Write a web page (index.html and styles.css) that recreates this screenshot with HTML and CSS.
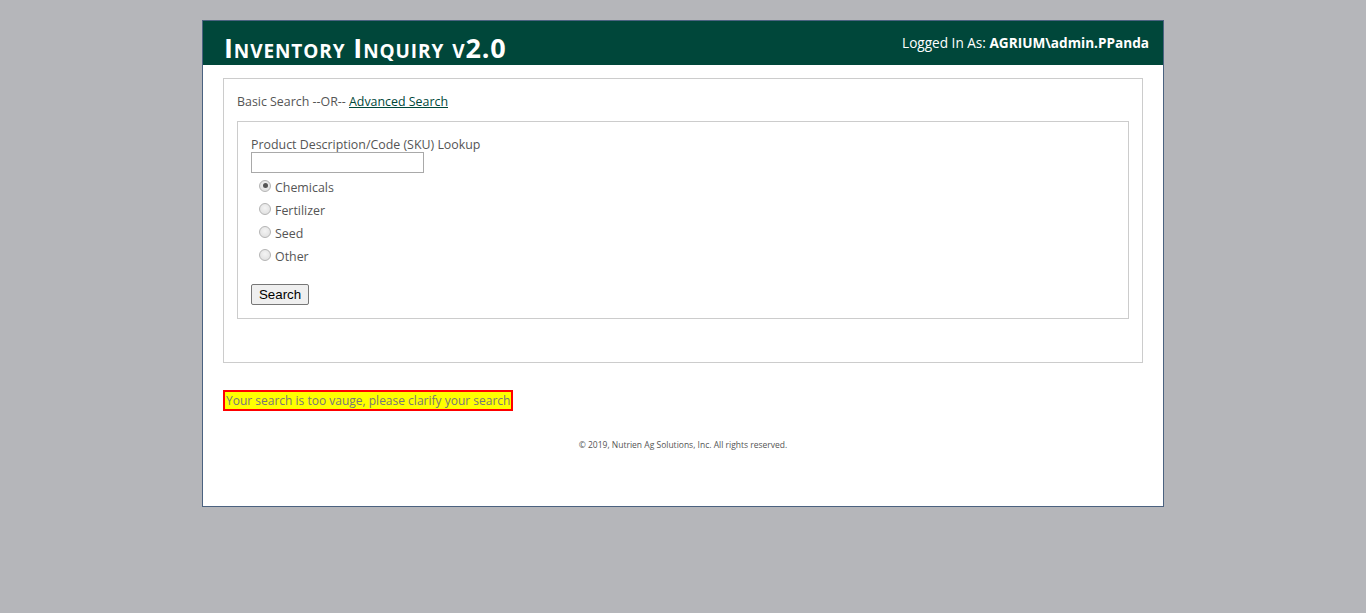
FILE: index.html
```html
<!DOCTYPE html>
<html>
<head>
<meta charset="utf-8">
<link rel="stylesheet" href="styles.css">
</head>
<body>
<div class="page">
  <div class="header">
    <div class="title">Inventory Inquiry v2.0</div>
    <div class="user">Logged In As: <b>AGRIUM\admin.PPanda</b></div>
  </div>
  <div class="content">
    <div class="outer">
      <div class="mode">Basic Search --OR-- <a href="#">Advanced Search</a></div>
      <div class="inner">
        <div class="label">Product Description/Code (SKU) Lookup</div>
        <input class="lookup" type="text">
        <div class="radios">
          <label class="radio"><input type="radio" name="t" checked> Chemicals</label>
          <label class="radio"><input type="radio" name="t"> Fertilizer</label>
          <label class="radio"><input type="radio" name="t"> Seed</label>
          <label class="radio"><input type="radio" name="t"> Other</label>
        </div>
        <button class="btn">Search</button>
      </div>
    </div>
    <div class="error">Your search is too vauge, please clarify your search</div>
    <div class="footer">© 2019, Nutrien Ag Solutions, Inc. All rights reserved.</div>
  </div>
</div>
</body>
</html>
```
FILE: styles.css
```css
html, body { margin: 0; padding: 0; }
body {
  background: #b5b6ba;
  font-family: "Open Sans", "Noto Sans", sans-serif;
  color: #555;
  font-size: 12.4px;
}
.page {
  width: 960px;
  height: 485px;
  margin: 20px auto 0;
  border: 1px solid #4b6280;
  background: #fff;
}
.header {
  height: 44px;
  background: #00473a;
  display: flex;
  justify-content: space-between;
  padding: 0 14px 0 21px;
  color: #fff;
}
.title {
  font-weight: bold;
  font-variant: small-caps;
  font-size: 27px;
  letter-spacing: 0.9px;
  line-height: 1;
  margin-top: 13px;
}
.user {
  font-size: 13.6px;
  margin-top: 12px;
}
.user b { font-weight: bold; }
.content { padding: 13px 20px 0; }
.outer {
  border: 1px solid #ccc;
  padding: 14px 13px 43px;
}
.mode { line-height: 17px; margin-bottom: 11px; }
.mode a { color: #00473a; text-decoration: underline; }
.inner {
  border: 1px solid #ccc;
  padding: 15px 13px 13px;
}
.label { line-height: 15px; }
.lookup {
  display: block;
  width: 173px;
  height: 21px;
  box-sizing: border-box;
  border: 1px solid #a9a9a9;
  margin: 0;
  padding: 0;
}
.radios { padding-top: 3px; }
.radio {
  display: flex;
  align-items: center;
  height: 23px;
  padding-left: 8px;
}
.radio input {
  appearance: none;
  -webkit-appearance: none;
  box-sizing: border-box;
  margin: 0 4px 4px 0;
  width: 12px;
  height: 12px;
  border-radius: 50%;
  border: 1px solid #b4b4b4;
  background: radial-gradient(circle at 50% 40%, #f4f4f4 0%, #dcdcdc 100%);
  position: relative;
}
.radio input:checked::after {
  content: "";
  position: absolute;
  left: 2.5px;
  top: 2.5px;
  width: 5px;
  height: 5px;
  border-radius: 50%;
  background: #555;
}
.btn {
  margin-top: 16px;
  font-family: "Liberation Sans", Arial, sans-serif;
  font-size: 13.3px;
  height: 21px;
  padding: 0 7px;
  border: 1px solid #767676;
  border-radius: 2px;
  background: #efefef;
  color: #000;
}
.error {
  display: inline-block;
  margin-top: 27px;
  border: 2px solid #f00;
  background: #ff0;
  color: #777;
  font-size: 12px;
  line-height: 17px;
  padding: 0 1px 0 1px;
}
.footer {
  text-align: center;
  font-size: 8.5px;
  margin-top: 28px;
  color: #555;
}
```
